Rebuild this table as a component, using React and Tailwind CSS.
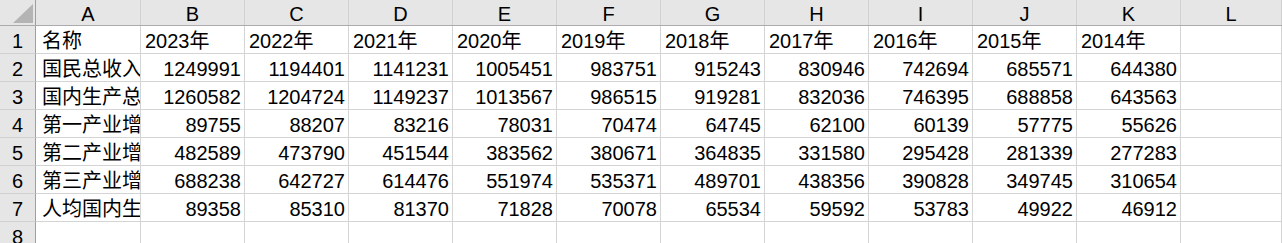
const columns = ['A', 'B', 'C', 'D', 'E', 'F', 'G', 'H', 'I', 'J', 'K', 'L']

const rows = [
  ['名称', '2023年', '2022年', '2021年', '2020年', '2019年', '2018年', '2017年', '2016年', '2015年', '2014年'],
  ['国民总收入', 1249991, 1194401, 1141231, 1005451, 983751, 915243, 830946, 742694, 685571, 644380],
  ['国内生产总值', 1260582, 1204724, 1149237, 1013567, 986515, 919281, 832036, 746395, 688858, 643563],
  ['第一产业增加值', 89755, 88207, 83216, 78031, 70474, 64745, 62100, 60139, 57775, 55626],
  ['第二产业增加值', 482589, 473790, 451544, 383562, 380671, 364835, 331580, 295428, 281339, 277283],
  ['第三产业增加值', 688238, 642727, 614476, 551974, 535371, 489701, 438356, 390828, 349745, 310654],
  ['人均国内生产总值', 89358, 85310, 81370, 71828, 70078, 65534, 59592, 53783, 49922, 46912],
  [],
]

const grid = 'grid grid-cols-[36px_105px_repeat(10,104px)_1fr]'

export default function App() {
  return (
    <div
      className="w-[1282px] h-[243px] overflow-hidden bg-white text-[20px] text-black"
      style={{ fontFamily: '"Liberation Sans", "Noto Sans CJK SC", sans-serif' }}
    >
      {/* column headers */}
      <div className={`${grid} h-[26px] bg-[#e6e6e6] border-b border-[#ababab]`}>
        <div className="relative border-r border-[#9f9f9f]">
          <div className="absolute right-[2px] bottom-[2px] w-0 h-0 border-l-[20px] border-l-transparent border-b-[19px] border-b-[#b4b4b4]" />
        </div>
        {columns.map((c) => (
          <div key={c} className="border-r border-[#d0d0d0] text-center pt-[2px] leading-[24px] overflow-hidden">
            {c}
          </div>
        ))}
      </div>

      {rows.map((row, i) => (
        <div key={i} className={`${grid} h-[28px]`}>
          <div className="bg-[#e6e6e6] border-r border-b border-r-[#9f9f9f] border-b-[#d0d0d0] text-center pt-[3px] leading-[24px]">
            {i + 1}
          </div>
          {columns.map((c, j) => {
            const v = row[j]
            const isNum = typeof v === 'number'
            return (
              <div
                key={c}
                className={`border-r border-b border-[#d4d4d4] pt-[3px] leading-[24px] whitespace-nowrap overflow-hidden ${
                  isNum ? 'text-right pr-[3px]' : j === 0 ? 'text-left pl-[6px]' : 'text-left pl-[4px]'
                }`}
              >
                {v}
              </div>
            )
          })}
        </div>
      ))}
    </div>
  )
}
